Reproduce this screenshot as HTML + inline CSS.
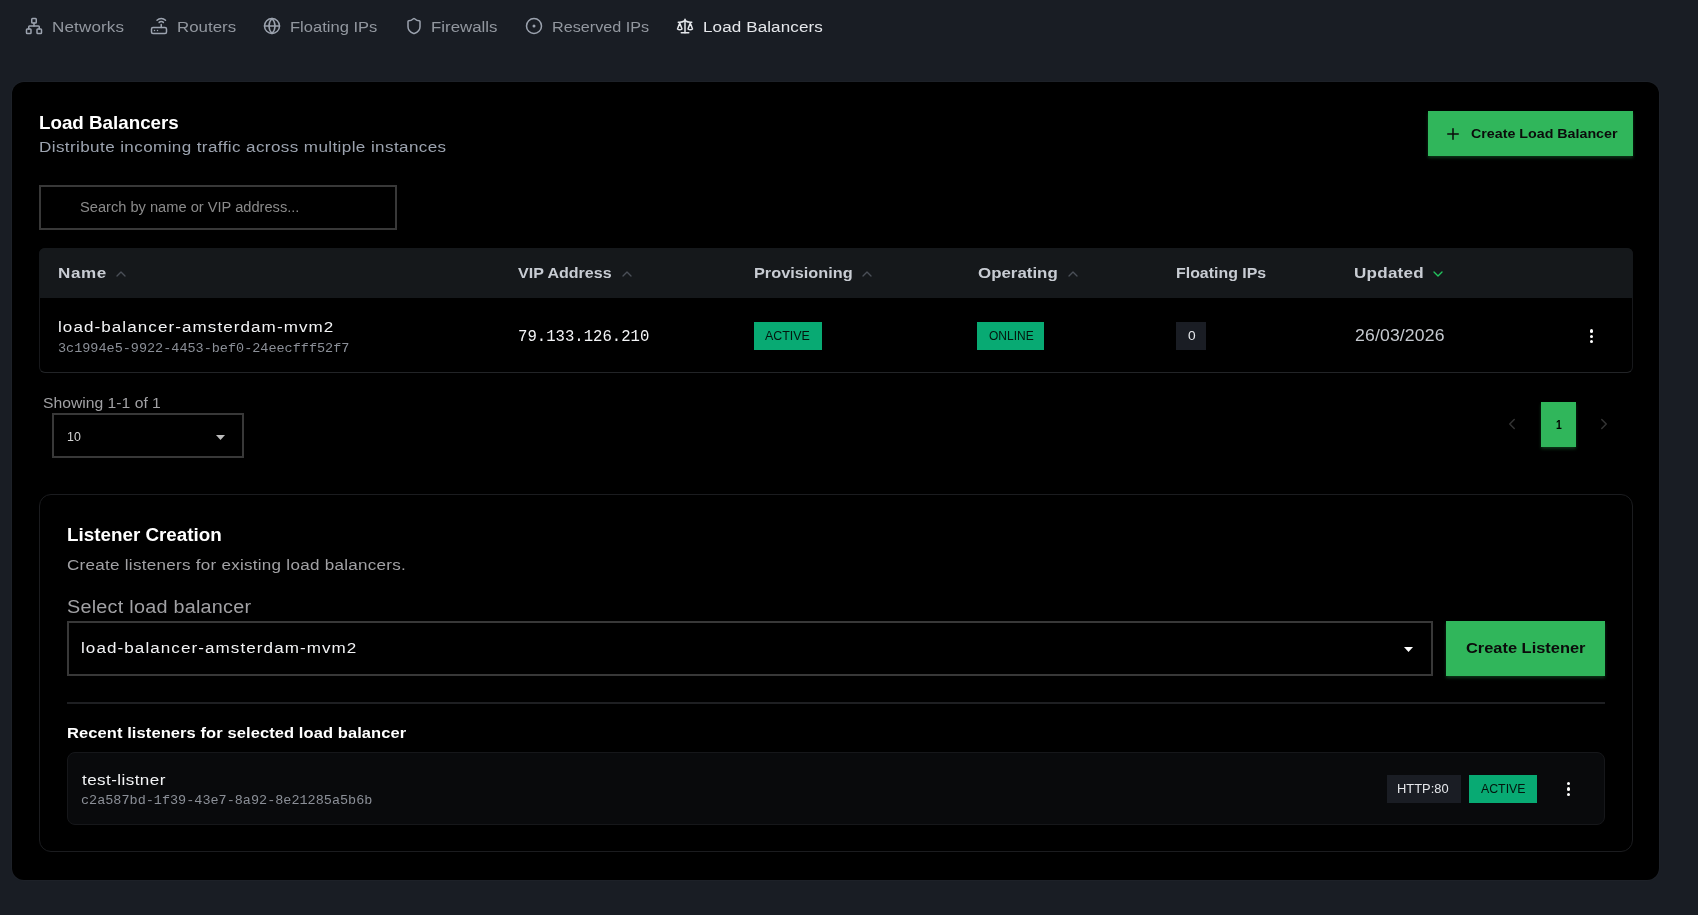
<!DOCTYPE html>
<html><head><meta charset="utf-8"><title>Load Balancers</title>
<style>
html,body{margin:0;padding:0}
body{width:1698px;height:915px;overflow:hidden;background:#191d24;position:relative;font-family:"Liberation Sans",sans-serif}
.b{position:absolute}
.i{position:absolute;overflow:visible}
.t{position:absolute;line-height:0;white-space:pre;transform-origin:0 0}
</style></head><body>
<svg class="i" style="left:25px;top:17.3px" width="18" height="18" viewBox="0 0 24 24" fill="none" stroke="#9ca3af" stroke-width="2" stroke-linecap="round" stroke-linejoin="round"><rect x="16" y="16" width="6" height="6" rx="1"/><rect x="2" y="16" width="6" height="6" rx="1"/><rect x="9" y="2" width="6" height="6" rx="1"/><path d="M5 16v-3a1 1 0 0 1 1-1h12a1 1 0 0 1 1 1v3"/><path d="M12 12V8"/></svg>
<svg class="i" style="left:150px;top:17.3px" width="18" height="18" viewBox="0 0 24 24" fill="none" stroke="#9ca3af" stroke-width="2" stroke-linecap="round" stroke-linejoin="round"><rect width="20" height="8" x="2" y="14" rx="2"/><path d="M6.01 18H6"/><path d="M10.01 18H10"/><path d="M15 10v4"/><path d="M17.84 7.17a4 4 0 0 0-5.66 0"/><path d="M20.66 4.34a8 8 0 0 0-11.31 0"/></svg>
<svg class="i" style="left:263px;top:17.3px" width="18" height="18" viewBox="0 0 24 24" fill="none" stroke="#9ca3af" stroke-width="2" stroke-linecap="round" stroke-linejoin="round"><circle cx="12" cy="12" r="10"/><path d="M12 2a14.5 14.5 0 0 0 0 20 14.5 14.5 0 0 0 0-20"/><path d="M2 12h20"/></svg>
<svg class="i" style="left:404.5px;top:17.3px" width="18" height="18" viewBox="0 0 24 24" fill="none" stroke="#9ca3af" stroke-width="2" stroke-linecap="round" stroke-linejoin="round"><path d="M20 13c0 5-3.5 7.5-7.66 8.95a1 1 0 0 1-.67-.01C7.5 20.5 4 18 4 13V6a1 1 0 0 1 1-1c2 0 4.5-1.2 6.24-2.72a1.17 1.17 0 0 1 1.52 0C14.51 3.81 17 5 19 5a1 1 0 0 1 1 1z"/></svg>
<svg class="i" style="left:525px;top:17.3px" width="18" height="18" viewBox="0 0 24 24" fill="none" stroke="#9ca3af" stroke-width="2" stroke-linecap="round" stroke-linejoin="round"><circle cx="12" cy="12" r="10"/><circle cx="12" cy="12" r="1"/></svg>
<svg class="i" style="left:676px;top:17.3px" width="18" height="18" viewBox="0 0 24 24" fill="none" stroke="#e5e7eb" stroke-width="2" stroke-linecap="round" stroke-linejoin="round"><path d="m16 16 3-8 3 8c-.87.65-1.92 1-3 1s-2.13-.35-3-1Z"/><path d="m2 16 3-8 3 8c-.87.65-1.92 1-3 1s-2.13-.35-3-1Z"/><path d="M7 21h10"/><path d="M12 3v18"/><path d="M3 7h2c2 0 5-1 7-2 2 1 5 2 7 2h2"/></svg>
<div class="b" style="left:12px;top:82px;width:1647px;height:798px;background:#000000;border-radius:12px;box-shadow:0 0 0 1px rgba(255,255,255,0.02)"></div>
<div class="b" style="left:1428px;top:111px;width:205px;height:45px;background:#30b65b;box-shadow:0 2px 3px rgba(20,90,40,0.6)"></div>
<svg class="i" style="left:1444px;top:125px" width="18" height="18" viewBox="0 0 24 24" fill="none" stroke="#0b0b0b" stroke-width="2" stroke-linecap="round" stroke-linejoin="round"><path d="M5 12h14"/><path d="M12 5v14"/></svg>
<div class="b" style="left:39px;top:185px;width:358px;height:45px;box-sizing:border-box;border:2px solid #383838"></div>
<div class="b" style="left:39px;top:248px;width:1594px;height:125px;box-sizing:border-box;border:1px solid #17181b;border-bottom-color:#222427;border-radius:6px;overflow:hidden"></div>
<div class="b" style="left:39px;top:248px;width:1594px;height:50px;background:#15181b;border-radius:6px 6px 0 0"></div>
<svg class="i" style="left:112.66666666666667px;top:265.6666666666667px" width="16" height="16" viewBox="0 0 24 24" fill="none" stroke="#4a4f57" stroke-width="2" stroke-linecap="round" stroke-linejoin="round"><path d="m18 15-6-6-6 6"/></svg>
<svg class="i" style="left:618.6666666666666px;top:265.6666666666667px" width="16" height="16" viewBox="0 0 24 24" fill="none" stroke="#4a4f57" stroke-width="2" stroke-linecap="round" stroke-linejoin="round"><path d="m18 15-6-6-6 6"/></svg>
<svg class="i" style="left:858.6666666666666px;top:265.6666666666667px" width="16" height="16" viewBox="0 0 24 24" fill="none" stroke="#4a4f57" stroke-width="2" stroke-linecap="round" stroke-linejoin="round"><path d="m18 15-6-6-6 6"/></svg>
<svg class="i" style="left:1064.6666666666667px;top:265.6666666666667px" width="16" height="16" viewBox="0 0 24 24" fill="none" stroke="#4a4f57" stroke-width="2" stroke-linecap="round" stroke-linejoin="round"><path d="m18 15-6-6-6 6"/></svg>
<svg class="i" style="left:1429.6666666666667px;top:265.6666666666667px" width="16" height="16" viewBox="0 0 24 24" fill="none" stroke="#22c55e" stroke-width="2" stroke-linecap="round" stroke-linejoin="round"><path d="m6 9 6 6 6-6"/></svg>
<div class="b" style="left:754px;top:322px;width:68px;height:28px;background:#08aa73"></div>
<div class="b" style="left:977px;top:322px;width:67px;height:28px;background:#08aa73"></div>
<div class="b" style="left:1176px;top:322px;width:30px;height:28px;background:#1a1d24"></div>
<div class="b" style="left:1589.75px;top:329.35px;width:3.3px;height:3.3px;background:#fff;border-radius:50%"></div>
<div class="b" style="left:1589.75px;top:334.65000000000003px;width:3.3px;height:3.3px;background:#fff;border-radius:50%"></div>
<div class="b" style="left:1589.75px;top:339.95000000000005px;width:3.3px;height:3.3px;background:#fff;border-radius:50%"></div>
<div class="b" style="left:52px;top:413px;width:192px;height:45px;box-sizing:border-box;border:2px solid #383838"></div>
<svg class="i" style="left:216px;top:435px" width="9" height="5" viewBox="0 0 9 5"><path d="M0 0H9L4.5 5Z" fill="#bdbdbd"/></svg>
<svg class="i" style="left:1503px;top:415.25px" width="18" height="18" viewBox="0 0 24 24" fill="none" stroke="#333333" stroke-width="2" stroke-linecap="round" stroke-linejoin="round"><path d="m15 18-6-6 6-6"/></svg>
<div class="b" style="left:1541px;top:402px;width:35px;height:45px;background:#30b65b;box-shadow:0 2px 3px rgba(20,90,40,0.6)"></div>
<svg class="i" style="left:1595px;top:415.25px" width="18" height="18" viewBox="0 0 24 24" fill="none" stroke="#333333" stroke-width="2" stroke-linecap="round" stroke-linejoin="round"><path d="m9 18 6-6-6-6"/></svg>
<div class="b" style="left:39px;top:494px;width:1594px;height:358px;box-sizing:border-box;border:1px solid #1b1c1f;border-radius:12px"></div>
<div class="b" style="left:67px;top:621px;width:1366px;height:55px;box-sizing:border-box;border:2px solid #383838"></div>
<svg class="i" style="left:1404px;top:647px" width="9" height="5" viewBox="0 0 9 5"><path d="M0 0H9L4.5 5Z" fill="#ffffff"/></svg>
<div class="b" style="left:1446px;top:621px;width:159px;height:55px;background:#30b65b;box-shadow:0 2px 3px rgba(20,90,40,0.6)"></div>
<div class="b" style="left:67px;top:702px;width:1538px;height:2px;background:#1e1f22"></div>
<div class="b" style="left:67px;top:752px;width:1538px;height:73px;box-sizing:border-box;background:#090a0c;border:1px solid #16171a;border-radius:8px"></div>
<div class="b" style="left:1387px;top:775px;width:74px;height:28px;background:#1a1d24"></div>
<div class="b" style="left:1469px;top:775px;width:68px;height:28px;background:#08aa73"></div>
<div class="b" style="left:1566.75px;top:782.0500000000001px;width:3.3px;height:3.3px;background:#fff;border-radius:50%"></div>
<div class="b" style="left:1566.75px;top:787.25px;width:3.3px;height:3.3px;background:#fff;border-radius:50%"></div>
<div class="b" style="left:1566.75px;top:792.5500000000001px;width:3.3px;height:3.3px;background:#fff;border-radius:50%"></div>
<div style="position:absolute;left:0;top:0;width:1698px;height:915px;will-change:transform">
<div class="t" id="nav1" style="left:51.60px;top:27px;font-family:'Liberation Sans', sans-serif;font-weight:400;font-size:15.5px;color:#92979f;letter-spacing:0.130px;transform:scaleX(1.1000)">Networks</div>
<div class="t" id="nav2" style="left:176.91px;top:27px;font-family:'Liberation Sans', sans-serif;font-weight:400;font-size:15.5px;color:#92979f;letter-spacing:-0.000px;transform:scaleX(1.0887)">Routers</div>
<div class="t" id="nav3" style="left:289.53px;top:27px;font-family:'Liberation Sans', sans-serif;font-weight:400;font-size:15.5px;color:#92979f;letter-spacing:0.000px;transform:scaleX(1.0667)">Floating IPs</div>
<div class="t" id="nav4" style="left:431.31px;top:27px;font-family:'Liberation Sans', sans-serif;font-weight:400;font-size:15.5px;color:#92979f;letter-spacing:0.000px;transform:scaleX(1.0883)">Firewalls</div>
<div class="t" id="nav5" style="left:551.56px;top:27px;font-family:'Liberation Sans', sans-serif;font-weight:400;font-size:15.5px;color:#92979f;letter-spacing:0.000px;transform:scaleX(1.0435)">Reserved IPs</div>
<div class="t" id="nav6" style="left:702.70px;top:27px;font-family:'Liberation Sans', sans-serif;font-weight:400;font-size:15.5px;color:#e5e7eb;letter-spacing:0.091px;transform:scaleX(1.1000)">Load Balancers</div>
<div class="t" id="title" style="left:39.19px;top:123px;font-family:'Liberation Sans', sans-serif;font-weight:700;font-size:18.5px;color:#ffffff;letter-spacing:0.000px;transform:scaleX(1.0147)">Load Balancers</div>
<div class="t" id="sub" style="left:39.10px;top:147px;font-family:'Liberation Sans', sans-serif;font-weight:400;font-size:15.5px;color:#9ca3af;letter-spacing:0.364px;transform:scaleX(1.1000)">Distribute incoming traffic across multiple instances</div>
<div class="t" id="btn1" style="left:1470.80px;top:134px;font-family:'Liberation Sans', sans-serif;font-weight:700;font-size:13.5px;color:#0b0b0b;letter-spacing:0.000px;transform:scaleX(1.0554)">Create Load Balancer</div>
<div class="t" id="ph" style="left:80.45px;top:207px;font-family:'Liberation Sans', sans-serif;font-weight:400;font-size:14px;color:#8a8a8a;letter-spacing:0.000px;transform:scaleX(1.0457)">Search by name or VIP address...</div>
<div class="t" id="h1" style="left:57.60px;top:273px;font-family:'Liberation Sans', sans-serif;font-weight:700;font-size:15.5px;color:#c8ccd3;letter-spacing:0.576px;transform:scaleX(1.1000)">Name</div>
<div class="t" id="h2" style="left:518.20px;top:273px;font-family:'Liberation Sans', sans-serif;font-weight:700;font-size:15.5px;color:#c8ccd3;letter-spacing:0.000px;transform:scaleX(1.0344)">VIP Address</div>
<div class="t" id="h3" style="left:753.55px;top:273px;font-family:'Liberation Sans', sans-serif;font-weight:700;font-size:15.5px;color:#c8ccd3;letter-spacing:0.000px;transform:scaleX(1.0511)">Provisioning</div>
<div class="t" id="h4" style="left:977.70px;top:273px;font-family:'Liberation Sans', sans-serif;font-weight:700;font-size:15.5px;color:#c8ccd3;letter-spacing:0.000px;transform:scaleX(1.0890)">Operating</div>
<div class="t" id="h5" style="left:1175.67px;top:273px;font-family:'Liberation Sans', sans-serif;font-weight:700;font-size:15.5px;color:#c8ccd3;letter-spacing:0.000px;transform:scaleX(1.0264)">Floating IPs</div>
<div class="t" id="h6" style="left:1353.70px;top:273px;font-family:'Liberation Sans', sans-serif;font-weight:700;font-size:15.5px;color:#c8ccd3;letter-spacing:0.227px;transform:scaleX(1.1000)">Updated</div>
<div class="t" id="rname" style="left:57.60px;top:327px;font-family:'Liberation Sans', sans-serif;font-weight:400;font-size:15.5px;color:#f3f4f6;letter-spacing:0.973px;transform:scaleX(1.1000)">load-balancer-amsterdam-mvm2</div>
<div class="t" id="ruuid" style="left:57.60px;top:349px;font-family:'Liberation Mono', monospace;font-weight:400;font-size:13.5px;color:#8b8f97;letter-spacing:0.000px;transform:scaleX(0.9990)">3c1994e5-9922-4453-bef0-24eecfff52f7</div>
<div class="t" id="vip" style="left:517.80px;top:337px;font-family:'Liberation Mono', monospace;font-weight:400;font-size:15.6px;color:#f3f4f6;letter-spacing:0.000px;transform:scaleX(1.0023)">79.133.126.210</div>
<div class="t" id="b1" style="left:765.40px;top:336px;font-family:'Liberation Sans', sans-serif;font-weight:400;font-size:12.2px;color:#04150d;letter-spacing:0.000px;transform:scaleX(1.0182)">ACTIVE</div>
<div class="t" id="b2" style="left:988.50px;top:336px;font-family:'Liberation Sans', sans-serif;font-weight:400;font-size:12.2px;color:#04150d;letter-spacing:0.000px;transform:scaleX(0.9844)">ONLINE</div>
<div class="t" id="b3" style="left:1187.50px;top:336px;font-family:'Liberation Sans', sans-serif;font-weight:400;font-size:12.5px;color:#e5e7eb;letter-spacing:0.000px;transform:scaleX(1.1000)">0</div>
<div class="t" id="date" style="left:1354.70px;top:336px;font-family:'Liberation Sans', sans-serif;font-weight:400;font-size:16px;color:#c5c9cf;letter-spacing:0.141px;transform:scaleX(1.1000)">26/03/2026</div>
<div class="t" id="show" style="left:43.39px;top:403px;font-family:'Liberation Sans', sans-serif;font-weight:400;font-size:15.5px;color:#a1a1a4;letter-spacing:0.000px;transform:scaleX(1.0130)">Showing 1-1 of 1</div>
<div class="t" id="ten" style="left:66.78px;top:437px;font-family:'Liberation Sans', sans-serif;font-weight:400;font-size:12.2px;color:#d4d4d4;letter-spacing:0.000px;transform:scaleX(1.0167)">10</div>
<div class="t" id="pg1" style="left:1556.00px;top:425px;font-family:'Liberation Sans', sans-serif;font-weight:700;font-size:13px;color:#000000;letter-spacing:0.000px;transform:scaleX(0.8000)">1</div>
<div class="t" id="lc" style="left:66.72px;top:535px;font-family:'Liberation Sans', sans-serif;font-weight:700;font-size:17.5px;color:#ffffff;letter-spacing:0.000px;transform:scaleX(1.0754)">Listener Creation</div>
<div class="t" id="lcsub" style="left:66.70px;top:565px;font-family:'Liberation Sans', sans-serif;font-weight:400;font-size:15.5px;color:#a1a1a4;letter-spacing:0.244px;transform:scaleX(1.1000)">Create listeners for existing load balancers.</div>
<div class="t" id="sel" style="left:66.50px;top:607px;font-family:'Liberation Sans', sans-serif;font-weight:400;font-size:18px;color:#a1a1a4;letter-spacing:0.225px;transform:scaleX(1.1000)">Select load balancer</div>
<div class="t" id="selv" style="left:81.20px;top:648px;font-family:'Liberation Sans', sans-serif;font-weight:400;font-size:15.5px;color:#f3f4f6;letter-spacing:0.976px;transform:scaleX(1.1000)">load-balancer-amsterdam-mvm2</div>
<div class="t" id="btn2" style="left:1465.80px;top:648px;font-family:'Liberation Sans', sans-serif;font-weight:700;font-size:15px;color:#0b0b0b;letter-spacing:-0.000px;transform:scaleX(1.0936)">Create Listener</div>
<div class="t" id="recent" style="left:66.50px;top:733px;font-family:'Liberation Sans', sans-serif;font-weight:700;font-size:15px;color:#ffffff;letter-spacing:0.078px;transform:scaleX(1.1000)">Recent listeners for selected load balancer</div>
<div class="t" id="lname" style="left:81.80px;top:780px;font-family:'Liberation Sans', sans-serif;font-weight:400;font-size:15.5px;color:#f3f4f6;letter-spacing:0.388px;transform:scaleX(1.1000)">test-listner</div>
<div class="t" id="luuid" style="left:80.80px;top:801px;font-family:'Liberation Mono', monospace;font-weight:400;font-size:13.5px;color:#8b8f97;letter-spacing:0.000px;transform:scaleX(0.9990)">c2a587bd-1f39-43e7-8a92-8e21285a5b6b</div>
<div class="t" id="port" style="left:1397.47px;top:789px;font-family:'Liberation Sans', sans-serif;font-weight:400;font-size:12.5px;color:#e5e7eb;letter-spacing:0.000px;transform:scaleX(1.0306)">HTTP:80</div>
<div class="t" id="b4" style="left:1481.00px;top:789px;font-family:'Liberation Sans', sans-serif;font-weight:400;font-size:12.2px;color:#04150d;letter-spacing:-0.000px;transform:scaleX(1.0114)">ACTIVE</div>
</div>
</body></html>
